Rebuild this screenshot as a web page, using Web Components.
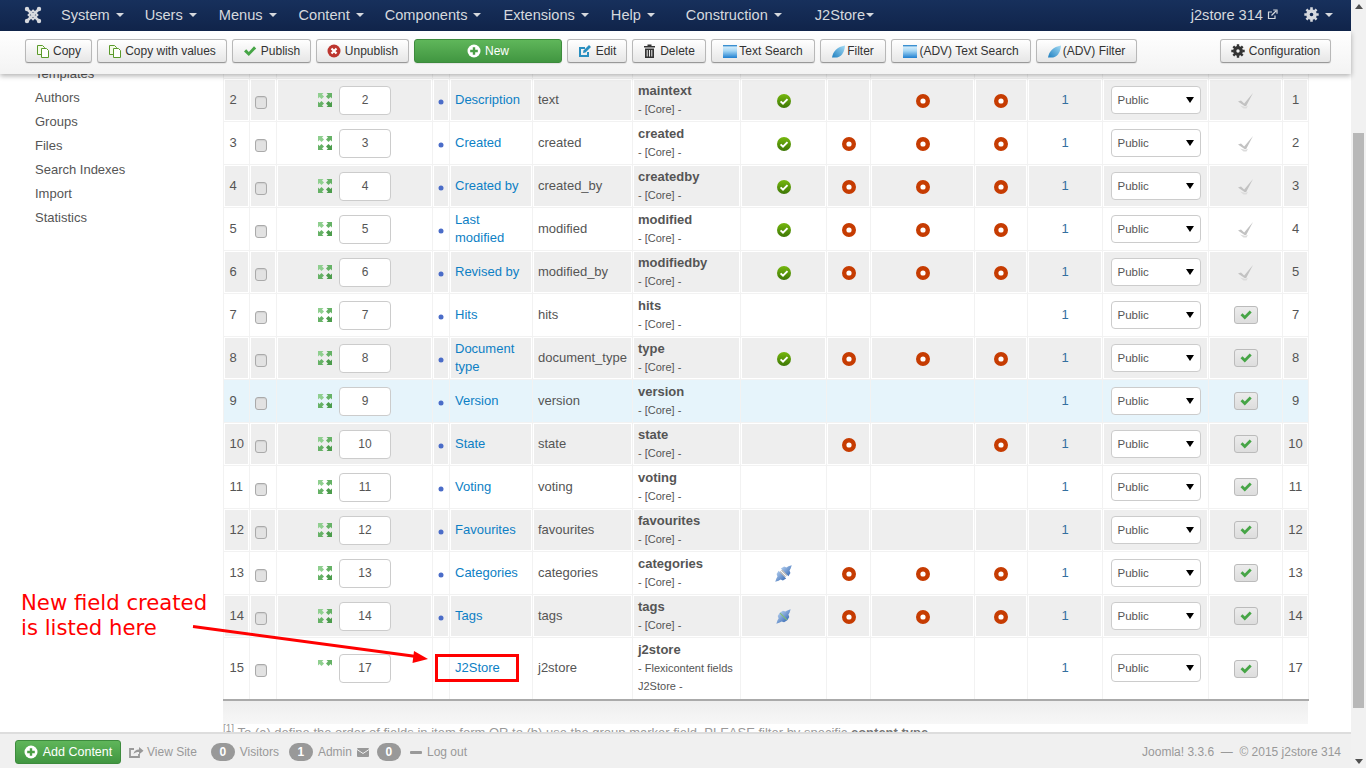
<!DOCTYPE html>
<html lang="en">
<head>
<meta charset="utf-8">
<title>Fields</title>
<style>
  html, body { margin: 0; height: 100%; overflow: hidden; background: #fff; }
  body { font: 13px/18px "Liberation Sans", Arial, sans-serif; color: #555; }
</style>
</head>
<body>
<j-app>
  <j-navbar slot="nav"></j-navbar>
  <j-toolbar slot="toolbar">
    <j-btn icon="copy" style="width:67px">Copy</j-btn>
    <j-btn icon="copy" style="width:130px">Copy with values</j-btn>
    <j-btn icon="publish" style="width:79px">Publish</j-btn>
    <j-btn icon="unpublish" style="width:93px">Unpublish</j-btn>
    <j-btn icon="new" variant="success" style="width:148px">New</j-btn>
    <j-btn icon="edit" style="width:60px">Edit</j-btn>
    <j-btn icon="trash" style="width:74px">Delete</j-btn>
    <j-btn icon="search" style="width:104px">Text Search</j-btn>
    <j-btn icon="leaf" style="width:66px">Filter</j-btn>
    <j-btn icon="search" style="width:140px">(ADV) Text Search</j-btn>
    <j-btn icon="leaf" style="width:101px">(ADV) Filter</j-btn>
    <j-btn icon="gear" slot="right" style="width:111px">Configuration</j-btn>
  </j-toolbar>
  <j-sidebar slot="side">
    <a>Templates</a><a>Authors</a><a>Groups</a><a>Files</a><a>Search Indexes</a><a>Import</a><a>Statistics</a>
  </j-sidebar>
  <j-field-table slot="content"></j-field-table>
  <j-footer slot="footer"></j-footer>
  <j-callout slot="overlay"></j-callout>
  <j-scrollbar slot="scroll"></j-scrollbar>
</j-app>

<script>
// shared icon set, all drawn inline
const PLUG_HALF = "M-3 8L0 6.500 2 6 3 3.800 6.500 3V13L3 12.200 2 10 0 9.500z";
const ICONS = {
  copy: '<svg width="13" height="14" viewBox="0 0 13 14"><path d="M1.5 1.5h5l2 2v7h-7z" fill="#f4fbe8" stroke="#5a9a2a"/><path d="M5.5 4.5h5l2 2v7h-7z" fill="#fff" stroke="#5a9a2a"/></svg>',
  publish: '<svg width="14" height="12" viewBox="0 0 14 12"><path d="M1 6.5l2.2-2.2 2.6 2.6L11 1.2l2.2 2.2L5.8 11z" fill="#46a546"/></svg>',
  unpublish: '<svg width="14" height="14" viewBox="0 0 14 14"><circle cx="7" cy="7" r="6.5" fill="#bd362f"/><path d="M4.5 4.5l5 5M9.5 4.5l-5 5" stroke="#fff" stroke-width="2.2"/></svg>',
  new: '<svg width="14" height="14" viewBox="0 0 14 14"><circle cx="7" cy="7" r="6.5" fill="#fff"/><path d="M7 3.2v7.6M3.2 7h7.6" stroke="#4a9f45" stroke-width="2.4"/></svg>',
  edit: '<svg width="14" height="14" viewBox="0 0 14 14"><path d="M10 8v4H2V4h5" fill="none" stroke="#2a8fc0" stroke-width="2"/><path d="M5.5 6.5L11 1l2 2-5.500 5.500-2.500.5z" fill="#2a8fc0"/></svg>',
  trash: '<svg width="13" height="14" viewBox="0 0 13 14"><path d="M1 2h11v1.6H1zM4.5 .5h4V2h-4z" fill="#333"/><path d="M2 4.500h9V14H2z" fill="#333"/><path d="M4.200 6v6.500M6.500 6v6.500M8.800 6v6.500" stroke="#eee" stroke-width="1"/></svg>',
  search: '<svg width="14" height="13" viewBox="0 0 14 13"><defs><linearGradient id="sg" x1="0" y1="0" x2="0" y2="1"><stop offset="0" stop-color="#e8f5fd"/><stop offset=".45" stop-color="#a4d6f4"/><stop offset="1" stop-color="#1f7fd0"/></linearGradient></defs><rect width="14" height="13" fill="url(#sg)"/><rect width="14" height="1.400" fill="#3a8fd0"/></svg>',
  leaf: '<svg width="13" height="13" viewBox="0 0 15 14"><defs><linearGradient id="lg" x1="0" y1="1" x2="1" y2="0"><stop offset="0" stop-color="#1f7fc0"/><stop offset="1" stop-color="#a5dcf5"/></linearGradient></defs><path d="M0 14C1 7 6 1.500 15 0c-.5 6-2.500 12-9 14z" fill="url(#lg)"/></svg>',
  gear: '<svg width="14" height="14" viewBox="0 0 14 14"><circle cx="7" cy="7" r="3.300" fill="none" stroke="#333" stroke-width="3.200"/><path d="M7 .3v2.400M7 11.300v2.400M.3 7h2.400M11.300 7h2.400M2.300 2.300l1.700 1.700M10 10l1.700 1.700M11.700 2.300L10 4M4 10l-1.700 1.700" stroke="#333" stroke-width="2.400"/></svg>',
  ok: '<svg width="14" height="14" viewBox="0 0 14 14"><defs><linearGradient id="okg" x1="0" y1="0" x2="0" y2="1"><stop offset="0" stop-color="#76b80e"/><stop offset="1" stop-color="#3d7606"/></linearGradient></defs><circle cx="7" cy="7" r="7" fill="url(#okg)"/><path d="M3.600 7.400l2.400 2.300 4.500-4.600" fill="none" stroke="#fff" stroke-width="2"/></svg>',
  dot: '<svg width="14" height="14" viewBox="0 0 14 14"><circle cx="7" cy="7" r="4.800" fill="#fff" stroke="#c63c02" stroke-width="4.400"/></svg>',
  plug: `<svg width="17" height="17" viewBox="0 0 16 16"><defs><linearGradient id="pg" x1="0" y1="0" x2="0" y2="1"><stop offset="0" stop-color="#a9c6ea"/><stop offset="1" stop-color="#4474ba"/></linearGradient></defs><g transform="rotate(-45 8 8)"><path d="${PLUG_HALF}" fill="url(#pg)"/><path d="${PLUG_HALF}" fill="url(#pg)" transform="matrix(-1 0 0 1 16 0)"/><rect x="6.500" y="4.500" width="3" height="7" fill="#aaa"/><rect x="7.500" y="4.500" width="1" height="7" fill="#fff"/></g></svg>`,
  plugOn: `<svg width="17" height="17" viewBox="0 0 16 16"><defs><linearGradient id="pg2" x1="0" y1="0" x2="0" y2="1"><stop offset="0" stop-color="#a9c6ea"/><stop offset="1" stop-color="#4474ba"/></linearGradient></defs><g transform="rotate(-45 8 8)"><path d="${PLUG_HALF}" fill="url(#pg2)" transform="translate(1.500 0)"/><path d="${PLUG_HALF}" fill="url(#pg2)" transform="matrix(-1 0 0 1 14.500 0)"/><rect x="7.600" y="3.500" width=".8" height="9" fill="#7fbf6a"/></g></svg>`,
  tickOff: '<svg width="18" height="17" viewBox="0 0 18 17"><path d="M1 9.500l3-1 3.200 3L16 1l-6.800 13H7.500z" fill="#c2c2c2"/><path d="M3 13.500l5 1.200 3-.8-1.500 2.600h-3z" fill="#dcdcdc"/></svg>',
  tickOn: '<svg width="12" height="10" viewBox="0 0 12 10"><path d="M.5 5.200l2-2 2.300 2.300L9.700.5l2 2-6.900 7z" fill="#46a546"/></svg>',
  move: '<svg width="14" height="14" viewBox="0 0 14 14"><path d="M0 0h5.500L4 1.500l2 2L3.500 6l-2-2L0 5.500z" fill="#8fcf8f"/><path d="M14 0H8.500L10 1.500l-2 2L10.500 6l2-2L14 5.500z" fill="#66b266"/><path d="M0 14h5.500L4 12.500l2-2L3.500 8l-2 2L0 8.500z" fill="#66b266"/><path d="M14 14H8.500l1.500-1.500-2-2L10.500 8l2 2L14 8.500z" fill="#4c9c4c"/></svg>',
  moveHalf: '<svg width="14" height="6" viewBox="0 0 14 6"><path d="M0 0h5.500L4 1.500l2 2L3.500 6l-2-2L0 5.500z" fill="#8fcf8f"/><path d="M14 0H8.500L10 1.500l-2 2L10.500 6l2-2L14 5.500z" fill="#66b266"/></svg>',
  joomla: '<svg width="18" height="18" viewBox="0 0 18 18"><g fill="none" stroke="#d6d9de" stroke-width="2.600" stroke-linecap="round"><path d="M3 3l12 12M15 3L3 15"/><path d="M9 4.500L13.500 9 9 13.500 4.500 9z" stroke-width="1.800"/></g><g fill="#d6d9de"><circle cx="3" cy="3" r="2.200"/><circle cx="15" cy="3" r="2.200"/><circle cx="3" cy="15" r="2.200"/><circle cx="15" cy="15" r="2.200"/></g></svg>',
  external: '<svg width="11" height="11" viewBox="0 0 11 11"><path d="M8 6.500V9.500H1.500V3H5" fill="none" stroke="#d6d9de" stroke-width="1.200"/><path d="M4.500 6.500L9 2M6.200 1h3.800v3.800" fill="none" stroke="#d6d9de" stroke-width="1.200"/></svg>',
  navGear: '<svg width="15" height="15" viewBox="0 0 14 14"><circle cx="7" cy="7" r="3.300" fill="none" stroke="#d6d9de" stroke-width="3.200"/><path d="M7 .3v2.400M7 11.300v2.400M.3 7h2.400M11.300 7h2.400M2.300 2.300l1.700 1.700M10 10l1.700 1.700M11.700 2.300L10 4M4 10l-1.700 1.700" stroke="#d6d9de" stroke-width="2.400"/></svg>',
  share: '<svg width="15" height="12" viewBox="0 0 15 12"><path d="M10 8v3H1V3h4" fill="none" stroke="#999" stroke-width="1.800"/><path d="M4.500 8C5 5 7 3.500 10 3.500V1l4.500 3.800L10 8.500V6C7.500 6 6 6.500 4.500 8z" fill="#999"/></svg>',
  mail: '<svg width="12" height="9" viewBox="0 0 12 9"><rect width="12" height="9" rx="1" fill="#999"/><path d="M0 1.500l6 4 6-4" fill="none" stroke="#f0f0f0" stroke-width="1"/></svg>',
  minus: '<svg width="12" height="3" viewBox="0 0 12 3"><rect width="12" height="3" rx="1" fill="#999"/></svg>',
  plusGreen: '<svg width="14" height="14" viewBox="0 0 14 14"><circle cx="7" cy="7" r="6.500" fill="#fff"/><path d="M7 3.200v7.600M3.200 7h7.600" stroke="#4a9f45" stroke-width="2.400"/></svg>'
};

class ShadowEl extends HTMLElement {
  constructor() {
    super();
    const shadow = this.attachShadow({ mode: "open" });
    const template = document.createElement("template");
    template.innerHTML = "<style>" + this.constructor.css + "</style>" + this.markup();
    shadow.appendChild(template.content.cloneNode(true));
  }
  markup() { return "<slot></slot>"; }
}

class JApp extends ShadowEl {
  static css = `
    :host { display: grid; grid-template-columns: 1fr 15px; height: 768px; position: relative; overflow: hidden; }
    .col { display: flex; flex-direction: column; min-width: 0; height: 768px; }
    main { flex: 1; display: flex; overflow: hidden; min-height: 0; }
  `;
  markup() {
    return `<div class="col">
      <slot name="nav"></slot>
      <slot name="toolbar"></slot>
      <main><slot name="side"></slot><slot name="content"></slot></main>
      <slot name="footer"></slot>
    </div>
    <slot name="scroll"></slot>
    <slot name="overlay"></slot>`;
  }
}

class JNavbar extends ShadowEl {
  static css = `
    :host { display: flex; align-items: center; flex: none; height: 31px; box-sizing: border-box; padding-bottom: 2px; background: linear-gradient(#17305c, #10244a); color: #d6d9de; font-size: 14.600px; position: relative; z-index: 3; }
    .logo { margin: 0 19px 0 24px; display: flex; }
    span { display: inline-flex; align-items: center; white-space: nowrap; }
    i { display: inline-block; width: 0; height: 0; margin-left: 6px; border: 4px solid transparent; border-top-color: #d6d9de; border-bottom: 0; }
    .right { margin-left: auto; }
  `;
  markup() {
    const items = [["System", 21], ["Users", 22], ["Menus", 22], ["Content", 21], ["Components", 22], ["Extensions", 22], ["Help", 31], ["Construction", 33]];
    const menu = items.map(([t, gap]) => `<span style="margin-right:${gap}px">${t}<i></i></span>`).join("");
    return `<div class="logo">${ICONS.joomla}</div>${menu}<span>J2Store<i style="margin-left:1px"></i></span>
      <span class="right">j2store 314&nbsp;${ICONS.external}</span>
      <span style="margin:0 18px 0 26px">${ICONS.navGear}<i></i></span>`;
  }
}

class JToolbar extends ShadowEl {
  static css = `
    :host { display: flex; align-items: center; flex: none; height: 43px; box-sizing: border-box; padding: 0 20px 3px 25px; gap: 5px; background: linear-gradient(#fff, #f3f3f3); box-shadow: 0 2px 5px rgba(0,0,0,.3); position: relative; z-index: 2; }
    .right { margin-left: auto; display: flex; }
  `;
  markup() { return `<slot></slot><div class="right"><slot name="right"></slot></div>`; }
}

class JBtn extends ShadowEl {
  static css = `
    :host { display: inline-flex; align-items: center; justify-content: center; gap: 4px; box-sizing: border-box; height: 24px; border: 1px solid #b8b8b8; border-bottom-color: #999; border-radius: 3px; background: linear-gradient(#fff, #e6e6e6); color: #333; font-size: 12px; white-space: nowrap; box-shadow: 0 1px 1px rgba(0,0,0,.08); }
    :host([variant="success"]) { background: linear-gradient(#5fb65a, #419641); border-color: #3d8b3d; color: #fff; }
    :host([icon="search"]), :host([icon="leaf"]) { gap: 2px; }
    .ic { display: flex; }
  `;
  markup() { return `<span class="ic">${ICONS[this.getAttribute("icon")] || ""}</span><slot></slot>`; }
}

class JSidebar extends ShadowEl {
  static css = `
    :host { display: block; flex: none; width: 223px; box-sizing: border-box; padding-left: 35px; margin-top: -12px; }
    ::slotted(a) { display: block; line-height: 24px; color: #555; }
  `;
}

// n, label, name, title, four state icons, active, ordering
const FIELDS = [
  [2, "Description", "text", "maintext", "ok", "", "dot", "dot", false, 1],
  [3, "Created", "created", "created", "ok", "dot", "dot", "dot", false, 2],
  [4, "Created by", "created_by", "createdby", "ok", "dot", "dot", "dot", false, 3],
  [5, "Last modified", "modified", "modified", "ok", "dot", "dot", "dot", false, 4],
  [6, "Revised by", "modified_by", "modifiedby", "ok", "dot", "dot", "dot", false, 5],
  [7, "Hits", "hits", "hits", "", "", "", "", true, 7],
  [8, "Document type", "document_type", "type", "ok", "dot", "dot", "dot", true, 8],
  [9, "Version", "version", "version", "", "", "", "", true, 9],
  [10, "State", "state", "state", "", "dot", "", "dot", true, 10],
  [11, "Voting", "voting", "voting", "", "", "", "", true, 11],
  [12, "Favourites", "favourites", "favourites", "", "", "", "", true, 12],
  [13, "Categories", "categories", "categories", "plug", "dot", "dot", "dot", true, 13],
  [14, "Tags", "tags", "tags", "plugOn", "dot", "dot", "dot", true, 14],
  [15, "J2Store", "j2store", "j2store", "", "", "", "", true, 17]
];
const COLS = [26, 27, 156, 17, 83, 100, 108, 86, 44, 104, 53, 75, 106, 74, 26];

class JFieldTable extends ShadowEl {
  static css = `
    :host { display: block; flex: none; width: 1090px; margin-top: -39px; }
    table { border-collapse: collapse; table-layout: fixed; width: 1085px; }
    td { border: 1px solid #f2f2f2; box-shadow: inset 0 0 0 1px #fff; height: 43px; padding: 0 5px; box-sizing: border-box; vertical-align: middle; line-height: 18px; }
    tr.alt td { background: #eee; }
    tr.hover td { background: #e6f4fb; box-shadow: none; }
    tr.last td { height: 62px; border-bottom: 2px solid #aaa; }
    .num { padding-left: 5.500px; }
    .c { text-align: center; padding: 0; }
    .c svg { vertical-align: middle; position: relative; top: 0; }
    .a { color: #0d7fc5; padding-left: 5px; }
    .acc { color: #33709f; }
    .title { font-weight: bold; line-height: 18px; }
    small { font-size: 11px; line-height: 18px; display: block; }
    .chk { appearance: none; display: block; box-sizing: border-box; width: 12px; height: 13px; margin: 5px 0 0 5px; border: 1px solid #aaa; border-radius: 3px; background: #e2e2e2; box-shadow: inset 0 1px 1px rgba(0,0,0,.08); }
    .order { display: flex; align-items: center; justify-content: center; gap: 7px; }
    .order > svg { margin-top: -1px; position: static; }
    .order.top > svg { margin-top: -11px; }
    .input { box-sizing: border-box; width: 52px; height: 29px; line-height: 27px; border: 1px solid #ccc; border-radius: 4px; background: #fff; font-size: 12px; text-align: center; }
    .select { box-sizing: border-box; display: flex; align-items: center; justify-content: space-between; width: 90px; height: 28px; margin: 0 auto; padding: 0 6px 0 6px; border: 1px solid #ccc; border-radius: 4px; background: #fff; font-size: 11.500px; }
    .select i { width: 0; height: 0; border: 4px solid transparent; border-top: 6px solid #000; border-bottom: 0; }
    .tick { display: inline-flex; align-items: center; justify-content: center; box-sizing: border-box; width: 24px; height: 18px; border: 1px solid #bbb; border-radius: 3px; background: linear-gradient(#ececec, #ddd); vertical-align: middle; }
    .foot { height: 23px; background: linear-gradient(#eee, #f7f7f7); width: 1085px; }
    .note { font-size: 13px; color: #999; white-space: nowrap; }
    sup { font-size: 10px; line-height: 0; }
    b { color: #777; }
  `;
  row(f) {
    const [n, label, name, title, a, b, c, d, active, id] = f;
    const rowClass = n === 9 ? "hover" : n === 15 ? "last" : n % 2 === 0 ? "alt" : "";
    const ic = (k) => `<td class="c">${k ? ICONS[k] : ""}</td>`;
    const sub = n === 15 ? "<small>- Flexicontent fields<br>J2Store -</small>" : "<small>- [Core] -</small>";
    const marker = n === 15 ? "" : '<svg width="6" height="6" viewBox="0 0 6 6" style="top:1px"><circle cx="3" cy="3" r="2.500" fill="#4a6cc8"/></svg>';
    return `<tr class="${rowClass}">
      <td class="num">${n}</td>
      <td class="c"><input type="checkbox" class="chk" aria-label="Select ${label}"></td>
      <td class="c"><div class="order${n === 15 ? " top" : ""}">${n === 15 ? ICONS.moveHalf : ICONS.move}<div class="input">${n === 15 ? 17 : n}</div></div></td>
      <td class="c">${marker}</td>
      <td class="a">${label}</td>
      <td>${name}</td>
      <td><div class="title">${title}</div>${sub}</td>
      ${ic(a)}${ic(b)}${ic(c)}${ic(d)}
      <td class="c acc">1</td>
      <td class="c"><div class="select">Public<i></i></div></td>
      <td class="c">${active ? `<span class="tick">${ICONS.tickOn}</span>` : ICONS.tickOff}</td>
      <td class="c">${id}</td>
    </tr>`;
  }
  markup() {
    const cols = COLS.map((w) => `<col style="width:${w}px">`).join("");
    const blank = `<tr>${COLS.map(() => "<td></td>").join("")}</tr>`;
    return `<table><colgroup>${cols}</colgroup><tbody>${blank}${FIELDS.map((f) => this.row(f)).join("")}</tbody></table>
      <div class="foot"></div>
      <div class="note"><sup>[1]</sup> To (a) define the order of fields in item form OR to (b) use the group marker field. PLEASE filter by specific <b>content type</b></div>`;
  }
}

class JFooter extends ShadowEl {
  static css = `
    :host { display: flex; align-items: center; flex: none; height: 36px; box-sizing: border-box; padding: 2px 10px 0 15px; background: #f0f0f0; border-top: 2px solid #ddd; color: #999; font-size: 12px; position: relative; z-index: 1; white-space: nowrap; }
    .add { display: inline-flex; align-items: center; justify-content: center; gap: 5px; box-sizing: border-box; width: 106px; height: 24px; border: 1px solid #3d8b3d; border-radius: 3px; background: linear-gradient(#5fb65a, #419641); color: #fff; font-size: 12.500px; }
    .badge { display: inline-block; width: 24px; height: 18px; line-height: 18px; border-radius: 9px; background: #999; color: #fff; font-weight: bold; text-align: center; }
    span { display: inline-flex; align-items: center; }
    .r { margin-left: auto; }
  `;
  markup() {
    return `<div class="add">${ICONS.plusGreen}Add Content</div>
      <span style="margin-left:8px;gap:3px">${ICONS.share}View Site</span>
      <span class="badge" style="margin-left:14px">0</span><span style="margin-left:5px">Visitors</span>
      <span class="badge" style="margin-left:10px">1</span><span style="margin-left:5px">Admin</span>
      <span style="margin-left:5px">${ICONS.mail}</span>
      <span class="badge" style="margin-left:8px">0</span>
      <span style="margin-left:9px;gap:5px">${ICONS.minus}Log out</span>
      <span class="r">Joomla! 3.3.6 &nbsp;—&nbsp; © 2015 j2store 314</span>`;
  }
}

// the screenshot's red annotation sits over the table, so this one is absolute
class JCallout extends ShadowEl {
  static css = `
    :host { position: absolute; left: 0; top: 0; width: 0; height: 0; z-index: 1; }
    .txt { position: absolute; left: 21px; top: 590px; width: 230px; font: 21.200px/25px "DejaVu Sans", sans-serif; color: #f00; }
    .box { position: absolute; left: 435px; top: 654px; width: 84px; height: 28px; box-sizing: border-box; border: 3px solid #f00; }
    svg { position: absolute; left: 0; top: 0; overflow: visible; }
  `;
  markup() {
    return `<div class="txt">New field created<br>is listed here</div><div class="box"></div>
      <svg width="1" height="1"><path d="M193 626.500L420 657" stroke="#f00" stroke-width="3" fill="none"/><path d="M428 659l-14-8-1.500 12z" fill="#f00"/></svg>`;
  }
}

class JScrollbar extends ShadowEl {
  static css = `
    :host { display: flex; flex-direction: column; align-items: center; height: 768px; background: #f1f1f1; }
    .thumb { position: absolute; top: 133px; width: 11px; height: 575px; background: #b8b8b8; }
    .up, .down { position: absolute; width: 0; height: 0; border: 4px solid transparent; }
    .up { top: 4px; border-bottom: 5px solid #505050; border-top: 0; }
    .down { bottom: 4px; border-top: 5px solid #505050; border-bottom: 0; }
  `;
  markup() { return `<div class="up"></div><div class="thumb"></div><div class="down"></div>`; }
}

customElements.define("j-app", JApp);
customElements.define("j-navbar", JNavbar);
customElements.define("j-toolbar", JToolbar);
customElements.define("j-btn", JBtn);
customElements.define("j-sidebar", JSidebar);
customElements.define("j-field-table", JFieldTable);
customElements.define("j-footer", JFooter);
customElements.define("j-callout", JCallout);
customElements.define("j-scrollbar", JScrollbar);
</script>
</body>
</html>
